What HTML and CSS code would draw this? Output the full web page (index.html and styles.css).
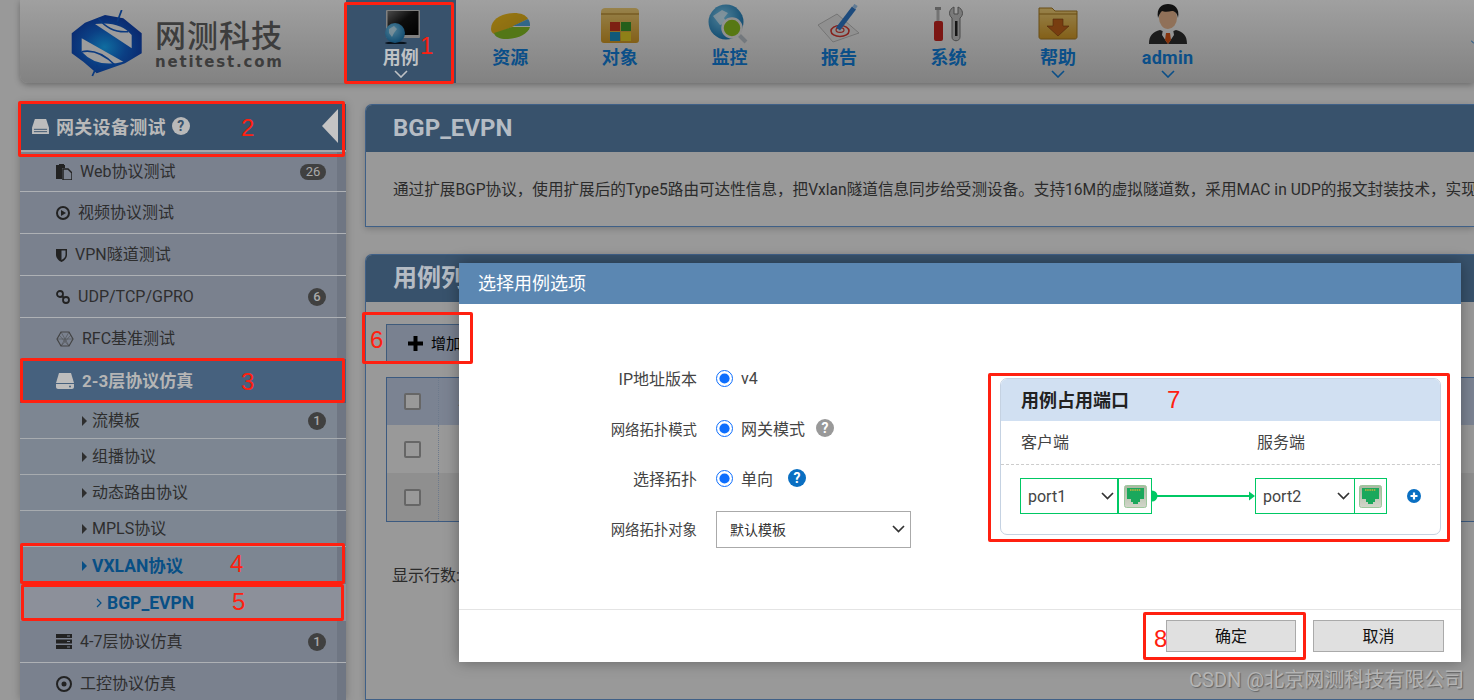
FILE: index.html
```html
<!DOCTYPE html>
<html lang="zh-CN">
<head>
<meta charset="utf-8">
<title>BGP_EVPN</title>
<link rel="stylesheet" href="styles.css">
</head>
<body>
<svg class="defs" width="0" height="0" aria-hidden="true">
  <defs>
    <linearGradient id="gold" x1="0" y1="0" x2="0" y2="1"><stop offset="0" stop-color="#f4d27a"/><stop offset="1" stop-color="#d39a26"/></linearGradient>
    <linearGradient id="pie" x1="0" y1="0" x2="1" y2="1"><stop offset="0" stop-color="#f6c21c"/><stop offset="1" stop-color="#d9a91a"/></linearGradient>
    <linearGradient id="screen" x1="0" y1="0" x2="1" y2="1"><stop offset="0" stop-color="#777"/><stop offset=".45" stop-color="#151515"/><stop offset="1" stop-color="#000"/></linearGradient>
    <radialGradient id="globe" cx=".4" cy=".35" r=".75"><stop offset="0" stop-color="#7fd0f5"/><stop offset="1" stop-color="#0f6fae"/></radialGradient>
    <radialGradient id="logoFill" cx=".47" cy=".55" r=".55"><stop offset="0" stop-color="#0f6da0"/><stop offset=".55" stop-color="#0b3f84"/><stop offset="1" stop-color="#0a2a70"/></radialGradient>
    <linearGradient id="rj" x1="0" y1="0" x2="0" y2="1"><stop offset="0" stop-color="#a9b8a0"/><stop offset="1" stop-color="#d2d6ca"/></linearGradient>
  </defs>
</svg>

<header class="topbar">
  <div class="brand">
    <svg class="logo" width="74" height="68" viewBox="0 0 74 68">
      <polygon points="1.700,23.300 15,12.700 35,5 53.300,8.300 71.700,23.300 71.700,43.300 55,53.300 26.700,63.300 13.300,51.700 1.700,43.300" fill="url(#logoFill)"/>
      <path d="M25 14L61.700 38.300V25Q50 10.700 25 14Z" fill="#9c9c9c"/>
      <path d="M11.700 28.300L53.300 51.700Q26.700 58.300 11.700 41.700Z" fill="#9c9c9c"/>
      <path d="M28.300 8.300Q40 23.300 58.300 21.700" stroke="#0a3a80" stroke-width="1.500" fill="none"/>
      <path d="M11.700 41.700Q28.300 38.300 45 55" stroke="#0a3a80" stroke-width="1.500" fill="none"/>
      <path d="M51.700 0L47.300 11.700M22.300 66L27.300 55" stroke="#0a3a80" stroke-width="1.800" fill="none"/>
    </svg>
    <div class="brand-text">
      <span class="brand-cn">网测科技</span>
      <span class="brand-en">netitest.com</span>
    </div>
  </div>
  <nav class="nav">
    <a class="nav-item is-active">
      <svg class="nav-icon dim" viewBox="0 0 44 40"><rect x="7" y="6" width="34" height="28" rx="1" fill="#cfcfcf"/><rect x="8.500" y="7" width="31" height="24" fill="url(#screen)"/><ellipse cx="17" cy="39" rx="11" ry="1.500" fill="#0b1c2c"/><circle cx="16" cy="29" r="10" fill="url(#globe)"/><path d="M10 25l5-3 3 3-3 4-2 4-3-4z" fill="#dff3fb" opacity=".7"/></svg>
      <span class="nav-label">用例</span>
      <svg class="nav-caret" viewBox="0 0 14 8"><path d="M1 1l6 6 6-6" fill="none" stroke="currentColor" stroke-width="1.600"/></svg>
    </a>
    <a class="nav-item">
      <svg class="nav-icon dim" viewBox="0 0 44 40"><path d="M3 25C3 15 14 9 26 9c7 0 12 2 14 6L20 25l-14 5c-2-1-3-3-3-5z" fill="url(#pie)"/><path d="M25 22l15-7c2 2 2 5 2 7z" fill="#4fa6dc"/><path d="M6 29l18-6 18 0c-2 7-12 12-24 12-6 0-11-2-12-6z" fill="#86c024"/></svg>
      <span class="nav-label">资源</span>
    </a>
    <a class="nav-item">
      <svg class="nav-icon dim" viewBox="0 0 44 40"><path d="M3 8c0-3 2-4 4-4h30c2 0 4 1 4 4v28c0 2-1 3-3 3H6c-2 0-3-1-3-3z" fill="url(#gold)"/><path d="M3 10h38" stroke="#a87a20"/><rect x="12" y="18" width="10" height="9" fill="#c9331e"/><rect x="23" y="18" width="10" height="9" fill="#3c9a2c"/><rect x="12" y="28" width="10" height="9" fill="#1b8fc4"/><rect x="23" y="28" width="10" height="9" fill="#e6cf25"/></svg>
      <span class="nav-label">对象</span>
    </a>
    <a class="nav-item">
      <svg class="nav-icon dim" viewBox="0 0 44 40"><circle cx="19" cy="18" r="17.500" fill="url(#globe)"/><path d="M6 12l9-6 6 3-4 5 3 5-7 2z" fill="#e9f7fd" opacity=".75"/><path d="M30 29l9 9" stroke="#b9c2c9" stroke-width="4"/><circle cx="25" cy="24" r="9.500" fill="#8cc21e" stroke="#e8e8e8" stroke-width="2.500"/></svg>
      <span class="nav-label">监控</span>
    </a>
    <a class="nav-item">
      <svg class="nav-icon dim" viewBox="0 0 44 40"><polygon points="1,21 20,10 42,29 16,38" fill="#e9e9e9" stroke="#bbb"/><ellipse cx="23" cy="27" rx="9" ry="5.500" fill="none" stroke="#d8372f" stroke-width="1.600"/><ellipse cx="23" cy="26" rx="4" ry="2.400" fill="none" stroke="#d8372f" stroke-width="1.200"/><path d="M21 25L37 4" stroke="#2f79c9" stroke-width="5"/><path d="M37 4l2-3" stroke="#9dc6ee" stroke-width="4"/></svg>
      <span class="nav-label">报告</span>
    </a>
    <a class="nav-item">
      <svg class="nav-icon dim" viewBox="0 0 44 40"><rect x="9.500" y="3" width="3" height="14" fill="#b9b9b9"/><rect x="8" y="3" width="6" height="3" fill="#999"/><rect x="7" y="17" width="9" height="20" rx="2" fill="#c8241f"/><path d="M27 3c-5 2-6 8-2 11v19c0 5 8 5 8 0V14c4-3 3-9-2-11v7h-4z" fill="#c4c4c4" stroke="#777"/><rect x="28" y="17" width="2.500" height="15" fill="#222"/></svg>
      <span class="nav-label">系统</span>
    </a>
    <a class="nav-item">
      <svg class="nav-icon dim" viewBox="0 0 44 40"><path d="M3 4h13l3 3h22v26c0 1-1 2-2 2H5c-1 0-2-1-2-2z" fill="url(#gold)" stroke="#a87a20"/><path d="M3 10h38" stroke="#a87a20"/><path d="M17 15h10v7h6L22 32 11 22h6z" fill="#c2621a" stroke="#7d3f10" stroke-width=".6"/></svg>
      <span class="nav-label">帮助</span>
      <svg class="nav-caret" viewBox="0 0 14 8"><path d="M1 1l6 6 6-6" fill="none" stroke="currentColor" stroke-width="1.600"/></svg>
    </a>
    <a class="nav-item">
      <svg class="nav-icon dim" viewBox="0 0 44 40"><path d="M3 40c0-9 4-12 11-14l8 3 8-3c7 2 11 5 11 14z" fill="#2d2d2d"/><path d="M17 25l5 3 5-3 1 6-6 9-6-9z" fill="#eee"/><path d="M20 29h4l1 7-3 4-3-4z" fill="#d85314"/><ellipse cx="22" cy="14" rx="9" ry="11" fill="#e8b78f"/><path d="M12 14C10 4 16 0 22 0s12 4 10 14c-1-5-3-7-6-7-4 1-8 1-10 0-2 2-3 4-4 7z" fill="#1c1c1c"/></svg>
      <span class="nav-label nav-latin">admin</span>
      <svg class="nav-caret" viewBox="0 0 14 8"><path d="M1 1l6 6 6-6" fill="none" stroke="currentColor" stroke-width="1.600"/></svg>
    </a>
  </nav>
  <svg class="nav-more" viewBox="0 0 6 8"><path d="M0 1l6 6" fill="none" stroke="currentColor" stroke-width="2"/></svg>
</header>

<div class="layout">
  <aside class="sidebar">
    <div class="side-head">
      <svg class="side-head-icon" viewBox="0 0 18 16"><path d="M3 0h12l3 9v7H0V9z" fill="#bdbdbd"/><path d="M2 11h14M2 13.500h14" stroke="#38526c"/></svg>
      <span class="side-head-text">网关设备测试</span>
      <span class="help help-head">?</span>
      <span class="side-arrow"></span>
    </div>
    <a class="side-item side-first">
      <svg width="16" height="16" viewBox="0 0 16 16"><path d="M0 1h9v3H6v11H0z" fill="#222"/><path d="M7 5h5l4 4v7H7z" fill="none" stroke="#222" stroke-width="1.500"/><path d="M3 0h5v2H3z" fill="#222"/></svg>
      <span class="side-text">Web协议测试</span><span class="badge">26</span>
    </a>
    <a class="side-item">
      <svg width="14" height="14" viewBox="0 0 14 14"><circle cx="7" cy="7" r="6" fill="none" stroke="#222" stroke-width="2"/><path d="M5 4l5 3-5 3z" fill="#222"/></svg>
      <span class="side-text">视频协议测试</span>
    </a>
    <a class="side-item">
      <svg width="11" height="14" viewBox="0 0 11 14"><path d="M0 1h11v6c0 3-3 6-5.500 7C3 13 0 10 0 7z" fill="#222"/><path d="M5.500 2.500h4V7c0 2-2 4-4 5z" fill="#798190"/></svg>
      <span class="side-text">VPN隧道测试</span>
    </a>
    <a class="side-item">
      <svg width="14" height="14" viewBox="0 0 14 14"><circle cx="4" cy="4" r="3" fill="none" stroke="#222" stroke-width="1.800"/><circle cx="10" cy="10" r="3" fill="none" stroke="#222" stroke-width="1.800"/><path d="M6 6l2 2" stroke="#222" stroke-width="1.800"/></svg>
      <span class="side-text side-latin">UDP/TCP/GPRO</span><span class="badge badge-round">6</span>
    </a>
    <a class="side-item side-item-short">
      <svg width="18" height="16" viewBox="0 0 18 16"><polygon points="1,8 5,1 13,1 17,8 13,15 5,15" fill="none" stroke="#444" stroke-width="1.200"/><path d="M1 8h16M5 1l8 14M13 1L5 15M3 4l10 11M15 4L5 15" stroke="#444" stroke-width=".5"/></svg>
      <span class="side-text">RFC基准测试</span>
    </a>
    <a class="side-item side-active">
      <svg width="18" height="16" viewBox="0 0 18 16"><path d="M3 0h12l3 10H0z" fill="#bdbdbd"/><path d="M0 11h18v3c0 1-1 2-2 2H2c-1 0-2-1-2-2z" fill="#bdbdbd"/><circle cx="14" cy="13.500" r="1" fill="#46617e"/></svg>
      <span class="side-text">2-3层协议仿真</span>
    </a>
    <a class="sub-item"><span class="tri"></span><span class="side-text">流模板</span><span class="badge badge-round">1</span></a>
    <a class="sub-item"><span class="tri"></span><span class="side-text">组播协议</span></a>
    <a class="sub-item"><span class="tri"></span><span class="side-text">动态路由协议</span></a>
    <a class="sub-item"><span class="tri"></span><span class="side-text">MPLS协议</span></a>
    <a class="sub-item sub-open"><span class="tri"></span><span class="side-text">VXLAN协议</span></a>
    <a class="leaf-item">
      <svg width="6" height="10" viewBox="0 0 6 10"><path d="M1 1l4 4-4 4" fill="none" stroke="#084f85" stroke-width="1.200"/></svg>
      <span class="side-text side-latin">BGP_EVPN</span>
    </a>
    <a class="side-item">
      <svg width="16" height="15" viewBox="0 0 16 15"><path d="M0 0h16v4H0zM0 5.500h16v4H0zM0 11h16v4H0z" fill="#222"/><path d="M11 2h3M11 7.500h3M11 13h3" stroke="#798190"/></svg>
      <span class="side-text">4-7层协议仿真</span><span class="badge badge-round">1</span>
    </a>
    <a class="side-item">
      <svg width="16" height="16" viewBox="0 0 16 16"><circle cx="8" cy="8" r="7" fill="none" stroke="#222" stroke-width="2"/><circle cx="8" cy="8" r="2.500" fill="#222"/></svg>
      <span class="side-text">工控协议仿真</span>
    </a>
  </aside>

  <main class="content">
    <section class="panel panel-intro">
      <h2 class="panel-title">BGP_EVPN</h2>
      <p class="panel-desc">通过扩展BGP协议，使用扩展后的Type5路由可达性信息，把Vxlan隧道信息同步给受测设备。支持16M的虚拟隧道数，采用MAC in UDP的报文封装技术，实现</p>
    </section>
    <section class="panel panel-list">
      <h2 class="panel-title">用例列表</h2>
      <div class="panel-body">
        <button class="add-btn"><svg width="15" height="15" viewBox="0 0 15 15"><path d="M5.500 0h4v5.500H15v4H9.500V15h-4V9.500H0v-4h5.500z" fill="#000"/></svg><span class="add-text">增加</span></button>
        <div class="table">
          <div class="tr tr-head"><span class="td-check"><i class="check"></i></span><span class="td-name">名称</span></div>
          <div class="tr"><span class="td-check"><i class="check"></i></span><span class="td-name"></span></div>
          <div class="tr tr-alt"><span class="td-check"><i class="check"></i></span><span class="td-name"></span></div>
        </div>
        <p class="rows-label">显示行数:</p>
      </div>
    </section>
  </main>
</div>

<div class="modal">
  <div class="modal-head"><span class="modal-title">选择用例选项</span></div>
  <div class="modal-body">
    <form class="opts">
      <label class="opt-label">IP地址版本</label>
      <div class="opt-field"><input class="radio" type="radio" checked><span>v4</span></div>
      <label class="opt-label opt-small">网络拓扑模式</label>
      <div class="opt-field"><input class="radio" type="radio" checked><span>网关模式</span><span class="help help-grey">?</span></div>
      <label class="opt-label">选择拓扑</label>
      <div class="opt-field"><input class="radio" type="radio" checked><span>单向</span><span class="help help-blue">?</span></div>
      <label class="opt-label opt-small">网络拓扑对象</label>
      <div class="opt-field">
        <span class="select-wrap select-wrap-tpl">
          <select class="tpl-select"><option>默认模板</option></select>
          <svg class="chev" width="13" height="8" viewBox="0 0 13 8"><path d="M1 1l5.500 5.500L12 1" fill="none" stroke="#333" stroke-width="1.700"/></svg>
        </span>
      </div>
    </form>
    <section class="ports">
      <h3 class="ports-head">用例占用端口</h3>
      <div class="ports-cols"><span>客户端</span><span>服务端</span></div>
      <div class="ports-row">
        <div class="port">
          <span class="select-wrap select-wrap-port">
            <select class="port-select"><option>port1</option></select>
            <svg class="chev" width="13" height="8" viewBox="0 0 13 8"><path d="M1 1l5.500 5.500L12 1" fill="none" stroke="#333" stroke-width="1.700"/></svg>
          </span>
          <span class="port-jack"><svg width="23" height="23" viewBox="0 0 23 23"><rect x=".5" y=".5" width="22" height="22" rx="2" fill="url(#rj)" stroke="#9cc79c"/><path d="M3 3h17v11h-4v3h-2v2H9v-2H7v-3H3z" fill="#1aa85c"/><path d="M6 5h11" stroke="#c9b43c" stroke-width="1.500" stroke-dasharray="1.500 .7"/></svg></span>
        </div>
        <svg class="port-link" width="103" height="14" viewBox="0 0 103 14"><path d="M0 1.500a5.500 5.500 0 0 1 0 11z" fill="#00c864"/><path d="M4 7h97" stroke="#00c864" stroke-width="2"/><path d="M97 2.500l6 4.500-6 4.500z" fill="#00c864"/></svg>
        <div class="port">
          <span class="select-wrap select-wrap-port select-wrap-thin">
            <select class="port-select"><option>port2</option></select>
            <svg class="chev" width="13" height="8" viewBox="0 0 13 8"><path d="M1 1l5.500 5.500L12 1" fill="none" stroke="#333" stroke-width="1.700"/></svg>
          </span>
          <span class="port-jack"><svg width="23" height="23" viewBox="0 0 23 23"><rect x=".5" y=".5" width="22" height="22" rx="2" fill="url(#rj)" stroke="#9cc79c"/><path d="M3 3h17v11h-4v3h-2v2H9v-2H7v-3H3z" fill="#1aa85c"/><path d="M6 5h11" stroke="#c9b43c" stroke-width="1.500" stroke-dasharray="1.500 .7"/></svg></span>
        </div>
        <svg class="port-add" width="14" height="14" viewBox="0 0 14 14"><circle cx="7" cy="7" r="7" fill="#0a6fc2"/><path d="M7 3.500v7M3.500 7h7" stroke="#fff" stroke-width="2.200"/></svg>
      </div>
    </section>
  </div>
  <div class="modal-foot">
    <button class="btn">确定</button>
    <button class="btn btn-wide">取消</button>
  </div>
</div>

<div class="mark mark-1"></div><span class="num num-1">1</span>
<div class="mark mark-2"></div><span class="num num-2">2</span>
<div class="mark mark-3"></div><span class="num num-3">3</span>
<div class="mark mark-4"></div><span class="num num-4">4</span>
<div class="mark mark-5"></div><span class="num num-5">5</span>
<div class="mark mark-6"></div><span class="num num-6">6</span>
<div class="mark mark-7"></div><span class="num num-7">7</span>
<div class="mark mark-8"></div><span class="num num-8">8</span>

<div class="watermark">CSDN @北京网测科技有限公司</div>
</body>
</html>
```

FILE: styles.css
```css
* { box-sizing: border-box; }
html, body { margin: 0; height: 700px; overflow: hidden; }
body {
  position: relative;
  width: 1474px;
  background: #999;
  color: #2b2b2b;
  font-family: Roboto, "Noto Sans CJK SC", sans-serif;
  font-size: 16px;
}
.defs { position: absolute; }
.dim { filter: brightness(.62); }
h2, h3, p { margin: 0; }

/* top bar */
.topbar {
  display: flex;
  align-items: flex-start;
  height: 83px;
  margin-left: 20px;
  background: linear-gradient(#a0a0a0, #828282);
  border-bottom-left-radius: 8px;
  box-shadow: 0 2px 6px rgba(0,0,0,.3);
}
.brand { display: flex; align-items: flex-start; gap: 11px; width: 326px; padding: 10px 0 0 50px; }
.logo { flex: none; }
.brand-text { display: flex; flex-direction: column; padding-top: 6px; }
.brand-cn { font: 500 31px/36px "Noto Sans CJK SC", sans-serif; color: #3d3d3d; letter-spacing: 1px; white-space: nowrap; }
.brand-en { font: 700 15px/18px "DejaVu Sans", sans-serif; color: #3d3d3d; letter-spacing: 1.800px; white-space: nowrap; margin-top: 1px; }
.nav { display: flex; }
.nav-item {
  display: flex;
  flex-direction: column;
  align-items: center;
  width: 109.550px;
  height: 83px;
  padding-top: 4px;
  color: #0b4f88;
}
.nav-item.is-active { background: #38526c; color: #bfc2c5; }
.nav-icon { width: 44px; height: 40px; flex: none; }
.nav-label { font: 700 18px/24px "Noto Sans CJK SC", sans-serif; margin-top: 0; }
.nav-latin { font-family: Roboto, sans-serif; letter-spacing: .3px; margin-top: 2px; margin-bottom: -2px; }
.nav-caret { width: 14px; height: 8px; margin-top: 2px; flex: none; }
.nav-more { width: 3px; height: 8px; margin: 38px 0 0 auto; flex: none; color: #0b4f88; }

/* page layout */
.layout { display: flex; gap: 19px; margin: 21px 0 0 20px; height: 596px; }
.sidebar { width: 326px; flex: none; background: #7a818e; box-shadow: 0 0 8px rgba(0,0,0,.25); }
.side-head {
  display: flex;
  align-items: center;
  gap: 7px;
  height: 48px;
  padding: 0 8px 2px 12px;
  background: #38526c;
  border-bottom: 2px solid #a5a8ab;
  color: #b9b9b9;
  font: 700 18px "Noto Sans CJK SC", sans-serif;
}
.side-head-text { letter-spacing: .3px; }
.side-head-icon { width: 17px; height: 15px; flex: none; }
.side-arrow {
  margin-left: auto;
  border-style: solid;
  border-width: 17px 16px 17px 0;
  border-color: transparent #c4c4c4 transparent transparent;
}
.help {
  display: inline-flex;
  align-items: center;
  justify-content: center;
  width: 18px;
  height: 18px;
  border-radius: 50%;
  font: 700 14px/1 Roboto, sans-serif;
  flex: none;
}
.help-head { background: #b9b9b9; color: #38526c; margin-left: -1px; }
.help-grey { background: #999; color: #fff; margin-left: 3px; }
.help-blue { background: #0a6fc2; color: #fff; margin-left: 7px; }
.side-item {
  display: flex;
  align-items: center;
  gap: 8px;
  height: 42px;
  padding: 0 20px 0 36px;
  background-image: linear-gradient(90deg, transparent 317px, #6f7683 317px);
  border-bottom: 1px solid #aeb1b5;
  color: #2e2e2e;
}
.side-first { height: 40px; }
.side-item-short { height: 41px; border-bottom: 0; }
.side-item svg { flex: none; }
.side-active {
  height: 44px;
  background: #46617e;
  color: #b5b5b5;
  font-size: 17px;
  font-weight: 700;
  border-bottom: 0;
}
.side-text { white-space: nowrap; margin-top: -3px; }
.side-latin { margin-top: 0; }
.badge {
  margin-left: auto;
  min-width: 26px;
  height: 16px;
  padding: 0 5px;
  border-radius: 8px;
  background: #404040;
  color: #a9a9a9;
  font-size: 13px;
  line-height: 16px;
  text-align: center;
}
.badge-round { min-width: 18px; height: 18px; line-height: 18px; border-radius: 50%; padding: 0; font-weight: 500; }
.sub-item {
  display: flex;
  align-items: center;
  height: 36px;
  padding: 0 20px 0 62px;
  background: #7d8692 linear-gradient(90deg, transparent 317px, #6f7683 317px);
  border-bottom: 1px solid #a7abaf;
  color: #2e2e2e;
}
.tri {
  width: 0;
  height: 0;
  margin-right: 5px;
  border-style: solid;
  border-width: 5px 0 5px 5px;
  border-color: transparent transparent transparent #2e2e2e;
  flex: none;
}
.sub-open { color: #084f85; font-size: 17.500px; font-weight: 700; border-bottom: 0; height: 37px; }
.sub-open .tri { border-left-color: #084f85; }
.leaf-item {
  display: flex;
  align-items: center;
  gap: 5px;
  height: 37px;
  padding-left: 76px;
  background: #8c909a;
  color: #084f85;
  font-size: 17.500px;
  font-weight: 700;
}

/* main panels */
.content { flex: 1; min-width: 0; display: flex; flex-direction: column; gap: 27px; }
.panel {
  border: 1px solid #3f6087;
  border-right: 0;
  border-radius: 7px 0 0 0;
  background: #999;
  box-shadow: 0 2px 6px rgba(0,0,0,.2);
  overflow: hidden;
}
.panel-title {
  height: 47px;
  padding-left: 27px;
  background: #38526c;
  color: #b5bcc4;
  font: 700 24px/47px Roboto, "Noto Sans CJK SC", sans-serif;
}
.panel-desc { padding: 26px 0 0 27px; height: 74px; font-size: 15.600px; line-height: 24px; white-space: nowrap; overflow: hidden; }
.panel-list { flex: 1; }
.panel-body { padding: 22px 0 0 20px; }
.add-btn {
  display: flex;
  align-items: center;
  gap: 8px;
  width: 120px;
  height: 39px;
  padding-left: 21px;
  background: #798190;
  border: 1px solid #3f5b7b;
  color: #000;
  font: 15px "Noto Sans CJK SC", sans-serif;
}
.add-text { margin-top: -3px; }
.table { margin-top: 14px; border: 1px solid #3c5a80; border-right: 0; }
.tr { display: flex; align-items: center; height: 48px; }
.tr-head { height: 47px; background: #7b8392; }
.tr-alt { background: #8f8f8f; }
.td-check { width: 52px; display: flex; justify-content: center; border-right: 1px dotted #6d7a8c; height: 100%; align-items: center; }
.td-name { padding-left: 19px; font-size: 14px; }
.check {
  width: 17px;
  height: 17px;
  border: 2px solid #666;
  border-radius: 2px;
  background: #999;
}
.rows-label { margin: 40px 0 0 6px; font-size: 16px; }

/* modal */
.modal {
  position: absolute;
  left: 459px;
  top: 263px;
  width: 1002px;
  height: 399px;
  display: flex;
  flex-direction: column;
  background: #fff;
  box-shadow: 0 0 14px rgba(0,0,0,.35);
  color: #333;
}
.modal-head {
  height: 41px;
  padding-left: 19px;
  background: #5b87b2;
  color: #fff;
  font: 18px/41px "Noto Sans CJK SC", sans-serif;
  flex: none;
}
.modal-title { display: block; margin-top: -1px; }
.modal-body { display: flex; height: 306px; border-bottom: 1px solid #e4e4e4; flex: none; }
.opts {
  display: grid;
  grid-template-columns: 238px 1fr;
  grid-auto-rows: 50px;
  column-gap: 19px;
  align-items: center;
  width: 452px;
  padding-top: 49px;
  align-content: start;
}
.opt-label { text-align: right; font-size: 16px; white-space: nowrap; color: #444; }
.opt-small { font-size: 14.400px; }
.opt-field { display: flex; align-items: center; gap: 8px; font-size: 16px; color: #444; }
.radio { width: 17px; height: 17px; margin: 0; accent-color: #0d6efd; flex: none; }
.select-wrap { position: relative; display: block; flex: none; }
.select-wrap-tpl { width: 195px; height: 37px; margin-top: 2px; }
.select-wrap-port { width: 98px; height: 100%; }
.select-wrap-thin { width: 99px; }
.select-wrap .chev { position: absolute; right: 6px; top: 50%; margin-top: -4px; pointer-events: none; }
.select-wrap-port .chev { right: 5px; }
.tpl-select {
  appearance: none;
  width: 100%;
  height: 100%;
  padding-left: 13px;
  border: 1px solid #aaa;
  border-radius: 0;
  background: #fff;
  color: #333;
  font: 14px "Noto Sans CJK SC", sans-serif;
}
.ports {
  width: 441px;
  height: 157px;
  margin: 74px 0 0 89px;
  border: 1px solid #c5d2e2;
  border-radius: 7px;
  overflow: hidden;
  flex: none;
}
.ports-head {
  height: 42px;
  padding-left: 20px;
  background: #d1e0f2;
  color: #222;
  font: 700 18px/41px "Noto Sans CJK SC", sans-serif;
}
.ports-cols {
  display: flex;
  height: 44px;
  padding-left: 20px;
  border-bottom: 1px dashed #ccc;
  line-height: 44px;
  color: #444;
}
.ports-cols span { width: 236px; flex: none; }
.ports-row { display: flex; align-items: center; padding: 13px 0 0 19px; }
.port { display: flex; width: 132px; height: 36px; border: 1px solid #00c864; flex: none; }
.port-select {
  appearance: none;
  width: 100%;
  height: 100%;
  padding-left: 7px;
  border: 0;
  border-right: 2px solid #00c864;
  border-radius: 0;
  background: #fff;
  color: #444;
  font: 16px Roboto, sans-serif;
  outline: 0;
}
.select-wrap-thin .port-select { border-right-width: 1px; }
.port-jack { display: flex; flex: 1; align-items: center; justify-content: center; }
.port-link { flex: none; margin-top: -1px; }
.port-add { margin-left: 20px; flex: none; }
.modal-foot { display: flex; gap: 17px; padding: 10px 0 0 707px; }
.btn {
  width: 130px;
  height: 32px;
  padding: 0 0 3px;
  background: #e0e0e0;
  border: 1px solid #aaa;
  color: #111;
  font: 16px "Noto Sans CJK SC", sans-serif;
}
.btn-wide { width: 131px; }

/* red annotations laid over the screenshot */
.mark { position: absolute; border: 3px solid #ff2010; border-radius: 2px; }
.mark-1 { left: 344px; top: 2px; width: 110px; height: 82px; }
.mark-2 { left: 18px; top: 101px; width: 327px; height: 56px; }
.mark-3 { left: 20px; top: 358px; width: 325px; height: 45px; }
.mark-4 { left: 20px; top: 543px; width: 325px; height: 41px; }
.mark-5 { left: 21px; top: 584px; width: 323px; height: 37px; }
.mark-6 { left: 362px; top: 312px; width: 111px; height: 52px; }
.mark-7 { left: 988px; top: 373px; width: 462px; height: 169px; }
.mark-8 { left: 1143px; top: 612px; width: 163px; height: 48px; }
.num { position: absolute; color: #ff2010; font: 24px/28px "Liberation Sans", sans-serif; }
.num-1 { left: 420px; top: 32px; }
.num-2 { left: 241px; top: 114px; }
.num-3 { left: 241px; top: 368px; }
.num-4 { left: 230px; top: 550px; }
.num-5 { left: 232px; top: 588px; }
.num-6 { left: 370px; top: 326px; }
.num-7 { left: 1167px; top: 386px; }
.num-8 { left: 1154px; top: 625px; }
.watermark {
  position: absolute;
  left: 1189px;
  top: 668px;
  color: #b4b4b4;
  font: 20px/24px Roboto, "Noto Sans CJK SC", sans-serif;
  text-shadow: 1px 1px 1px rgba(0,0,0,.35);
  white-space: nowrap;
}
```
